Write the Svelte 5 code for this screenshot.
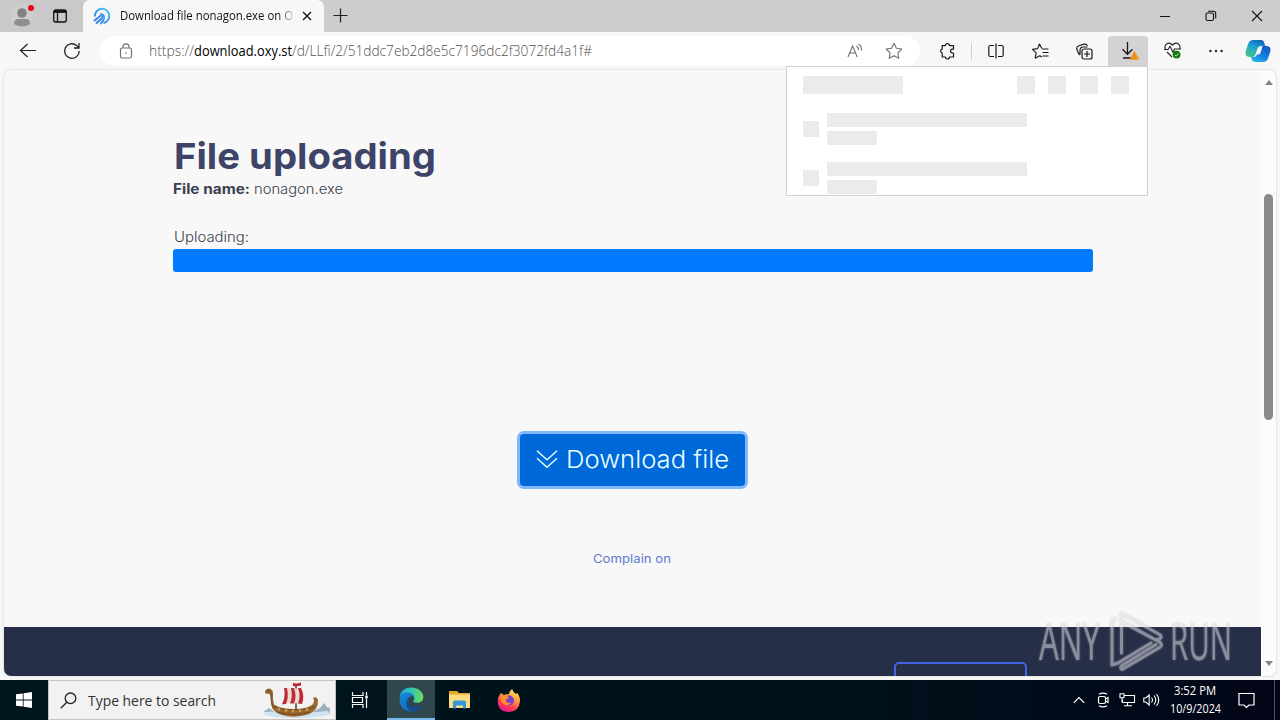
<script>
  const menuIcons = [0, 1, 2, 3];
  const rows = [0, 1];
</script>

{#snippet fit(text, width, height, base, cls)}
  <svg class="fit {cls}" {width} {height}><text x="0" y={base} textLength={width} lengthAdjust="spacingAndGlyphs">{text}</text></svg>
{/snippet}

<div class="desktop">
  <div class="titlebar">
    <div class="tools">
      <svg class="profile" width="24" height="24" viewBox="0 0 24 24">
        <circle cx="12" cy="12" r="11.5" fill="#d0cecd" />
        <circle cx="12" cy="9" r="4.8" fill="#858381" />
        <path d="M4 20q0-5 4-5h8q4 0 4 5q-8 5-16 0z" fill="#918f8d" />
        <circle cx="21" cy="4" r="3" fill="#e60012" />
      </svg>
      <svg class="workspaces" width="16" height="16" viewBox="0 0 16 16" fill="none" stroke="#111" stroke-width="1.3">
        <rect x="1.7" y="2" width="12.6" height="12" rx="2" /><path d="M2 3.6h12" stroke-width="2.6" /><path d="M5.5 4v10" />
      </svg>
    </div>
    <div class="tab">
      <svg width="18" height="18" viewBox="0 0 18 18" fill="none">
        <defs><linearGradient id="fav" x1="0" y1="1" x2="1" y2="0"><stop stop-color="#2670e8" /><stop offset="1" stop-color="#56cbec" /></linearGradient></defs>
        <path d="M1.9 9.500A7.200 7.200 0 1 1 10.500 16" stroke="url(#fav)" stroke-width="2" />
        <path d="M1.5 13.500 8 8.500M3.500 16l6.500-5.500M8 16.500l2.500-3.500" stroke="#3484e9" stroke-width="1.900" stroke-linecap="round" />
        <path d="M6.500 6.500q6-1.500 5.500 6l-3-2z" fill="#4199ed" />
      </svg>
      <div class="tabtitle">{@render fit('Download file nonagon.exe on O', 173, 20, 14, 't12')}</div>
      <svg class="close" width="10" height="10" viewBox="0 0 10 10" stroke="#111" stroke-width="1.3"><path d="M1 1l8 8M9 1L1 9" /></svg>
    </div>
    <svg class="plus" width="15" height="15" viewBox="0 0 15 15" stroke="#222" stroke-width="1.2"><path d="M7.5 .5v14M.5 7.5h14" /></svg>
    <div class="winctl">
      <svg width="11" height="12" viewBox="0 0 11 12" stroke="#111"><path d="M0 6.5h10" /></svg>
      <svg width="12" height="12" viewBox="0 0 12 12" fill="none" stroke="#111" stroke-width="1.1"><rect x="1" y="3" width="7.5" height="7.5" rx="1.5" /><path d="M3 1.2h5.5q2.2 0 2.2 2.2v5" /></svg>
      <svg width="12" height="12" viewBox="0 0 12 12" stroke="#111" stroke-width="1.1"><path d="M1 1l10 10M11 1L1 11" /></svg>
    </div>
  </div>

  <div class="toolbar">
    <svg class="back" width="18" height="16" viewBox="0 0 18 16" fill="none" stroke="#222" stroke-width="1.2"><path d="M8.5 1L1.5 7.500l7 6.500M1.5 7.500H17" /></svg>
    <svg class="reload" width="18" height="18" viewBox="0 0 18 18" fill="none" stroke="#222" stroke-width="1.3"><path d="M16.2 9A7.3 7.3 0 1 1 13.5 3.4L16 5.8M16 1v5h-5" /></svg>
    <div class="address">
      <svg class="lock" width="14" height="16" viewBox="0 0 14 16" fill="none" stroke="#707070" stroke-width="1.2"><rect x="1.5" y="5" width="11" height="10" rx="1.8" /><path d="M4 5V3.8a3 3 0 0 1 6 0V5" /><circle cx="7" cy="10" r=".8" fill="#666" stroke="none" /></svg>
      <div class="url">
        {@render fit('https://', 45, 22, 16, 'u')}
        {@render fit('download.oxy.st', 98, 22, 16, 'u host')}
        {@render fit('/d/LLfi/2/51ddc7eb2d8e5c7196dc2f3072fd4a1f#', 300, 22, 16, 'u')}
      </div>
      <svg class="read" width="16" height="16" viewBox="0 0 16 16" fill="none" stroke="#707070" stroke-width="1.1"><path d="M1 14L5.6 3l4.6 11M2.8 10h5.800M9.5 3q2 1.2 2.1 4M11.5 1q3 2 3.2 6.500" /></svg>
      <svg class="star" width="18" height="18" viewBox="0 0 18 18" fill="none" stroke="#707070" stroke-width="1.1" stroke-linejoin="round"><path d="M9 1.2l2.4 5 5.4.8-3.9 3.8.9 5.5L9 13.7l-4.8 2.6.9-5.5L1.2 7l5.4-.8z" /></svg>
    </div>
    <svg class="puzzle" width="17" height="18" viewBox="0 0 17 18" fill="none" stroke="#181818" stroke-width="1.2" stroke-linejoin="round"><path d="M3.200 3.600h3.200a2 2 0 0 1 4 0h4.100v3.600h-1a1.900 1.900 0 0 0 0 3.800h1v4h-4.100a2 2 0 0 1-4 0H3.200v-4a2 2 0 0 1 0-3.900z" /></svg>
    <i class="sep"></i>
    <svg class="split" width="16" height="16" viewBox="0 0 16 16" fill="none" stroke="#181818" stroke-width="1.2"><path d="M6 2.5H2.3Q.8 2.5.8 4v8q0 1.5 1.5 1.5H6M10 2.5h3.7q1.5 0 1.5 1.5v8q0 1.5-1.5 1.5H10M8 .5v15" /></svg>
    <svg class="favorites" width="17" height="17" viewBox="0 0 17 17" fill="none" stroke="#181818" stroke-width="1.1" stroke-linejoin="round"><path d="M9.8 5.5L7.5 1l-2 4.6-5 .8 3.7 3.5-1 5.300 4.600-2.400 2.200 1.200M10 6h6.500M10.500 9.500h6M10.500 13h6" /></svg>
    <svg class="collections" width="17" height="17" viewBox="0 0 17 17" fill="none" stroke="#181818" stroke-width="1.2"><path d="M4 12L2.500 10.500 .8 6Q.3 3.500 2.800 2.700L8 1.200q2.500-.5 3.400 1.600M4 11.500V7.500q0-3.500 3-3.500h4.500" /><rect x="6" y="6" width="10" height="10" rx="2" /><path d="M11 8v6M8 11h6" /></svg>
    <div class="download">
      <svg width="20" height="20" viewBox="0 0 20 20" fill="none"><path d="M7.5 1v12M2.5 8.300l5 5 5-5M3 17h8" stroke="#181818" stroke-width="1.3" /><path d="M14.5 10.500l4.200 7.800h-8.400z" fill="#f7941d" stroke="#f7941d" stroke-linejoin="round" /><path d="M14.5 13v2.500m0 1v1" stroke="#c97a1c" stroke-width="1" /></svg>
    </div>
    <svg class="health" width="18" height="18" viewBox="0 0 18 18" fill="none" stroke="#222" stroke-width="1.1"><path d="M1.5 7Q.2 4.8 2 2.5q3-3 6.5.5 3.500-3.500 6.500-.5 1.800 2.300.5 4.500M0 7.500h4l2-3.200 3 6L10.500 7H17M3 10l5 5" /><circle cx="12.600" cy="12.600" r="3.900" fill="#107c10" stroke="none" /><path d="M11 13l1.200 1.100 2.400-2.500" stroke="#bde5bd" stroke-width="1" /></svg>
    <svg class="more" width="16" height="4" viewBox="0 0 16 4" fill="#222"><circle cx="2.400" cy="2" r="1.200" /><circle cx="8" cy="2" r="1.200" /><circle cx="13.600" cy="2" r="1.200" /></svg>
    <svg class="copilot" width="26" height="24" viewBox="0 0 26 24">
      <defs>
        <linearGradient id="cp1" x1=".7" y1="0" x2=".2" y2="1"><stop stop-color="#1265bd" /><stop offset=".4" stop-color="#1ba1d6" /><stop offset="1" stop-color="#45c48a" /></linearGradient>
        <linearGradient id="cp2" x1=".8" y1="0" x2=".2" y2="1"><stop stop-color="#0e58bd" /><stop offset=".5" stop-color="#137ce0" /><stop offset="1" stop-color="#27b3f0" /></linearGradient>
      </defs>
      <path d="M8 1h8q2.500 0 3.300 3l1 3H16q-2.700 0-3.600 3L10.600 15q-1 3-3.600 3H5q-6 0-4-6.500l2.300-7Q4.500 1 8 1z" fill="url(#cp1)" />
      <path d="M18 23h-8q-2.500 0-3.300-3L6 18h2.500q2.700 0 3.600-2.500h1.500q1.500 0 2.200-2.500L17.600 7H21q6 0 4 6.500l-2.300 6.500Q21.500 23 18 23z" fill="url(#cp2)" />
    </svg>
  </div>

  <div class="frame">
    <div class="page">
      <main>
        <h1>{@render fit('File uploading', 262, 48, 36, 'h1')}</h1>
        <p class="name">{@render fit('File name:', 77, 22, 16, 'b14')}{@render fit('nonagon.exe', 89, 22, 16, 'm14')}</p>
        <p class="uploading">{@render fit('Uploading:', 75, 22, 16, 'm14')}</p>
        <div class="bar"></div>
        <button>
          <svg width="22" height="20" viewBox="0 0 22 20" fill="none" stroke="#e9ffff" stroke-width="1.4"><path d="M1 .8l10 9 10-9M1 8.200l10 9 10-9" /></svg>
          {@render fit('Download file', 163, 32, 24, 'btn')}
        </button>
        <p class="complain">{@render fit('Complain on', 78, 18, 13, 'link')}</p>
      </main>
      <footer><div class="outline"></div></footer>
    </div>
    <div class="scroll"><i class="up"></i><i class="thumb"></i><i class="down"></i></div>
  </div>

  <div class="taskbar">
    <div class="start"><svg width="16" height="16" viewBox="0 0 16 16" fill="#fff"><path d="M0 2.300l6.800-.9v6.200H0zM7.600 1.300L16 .1v7.500H7.600zM0 8.400h6.800v6.200L0 13.700zM7.600 8.400H16v7.500l-8.400-1.200z" /></svg></div>
    <div class="search">
      <svg width="17" height="17" viewBox="0 0 17 17" fill="none" stroke="#222" stroke-width="1.3"><circle cx="10.500" cy="6.300" r="5.300" /><path d="M6.800 10.200L.8 16.200" /></svg>
      <div class="query">{@render fit('Type here to search', 128, 24, 18, 'q')}</div>
      <svg class="ship" width="70" height="37" viewBox="0 0 70 37">
        <path d="M1 30l6-4 6 4zM52 29l6-3 4-5 3 4 3 1v6l-16 1z" fill="#9db4c0" />
        <path d="M0 31q12-3 24-1t42-1l2 3q-10 4-36 4-25 0-32-5z" fill="#cfe4f0" />
        <path d="M34 4v23" stroke="#5b3823" stroke-width="1.500" />
        <path d="M31 1q4 1 8-.5v3q-4 1-8 .5z" fill="#bc2534" />
        <path d="M22 6q10 1 17 0 4 8 1 16-10-2-20 0 4-8 2-16z" fill="#eadbcf" />
        <path d="M22 6h3q2 9-1 16l-4 .3q4-8 2-16.300zM29 6h3q3 8 0 15.500h-4q3-7 1-15.500zM36 6h3q4 8 1 16l-4-.4q3-8 0-15.600z" fill="#c22938" />
        <path d="M3 11q-.5-3 3-4.500 5 0 5 5-.5 6 1 11 8 5 22 4.500 13-.5 17-5 2-4 0-6 4-2 5 2 .5 11-10 14.500-14 4-26 .5Q9 30 9 20q0-8-2-8.500-1 1-4-.5z" fill="#99672f" />
        <path d="M5 9q4-1 4 4 0 10 3 14M12 25q20 6 41 0M15 30q18 5 33 0" stroke="#6d461f" stroke-width=".9" fill="none" />
        <g fill="#c99a48"><circle cx="17" cy="27" r="1.500" /><circle cx="24" cy="28.500" r="1.500" /><circle cx="31" cy="29" r="1.500" /><circle cx="38" cy="28.500" r="1.500" /><circle cx="45" cy="27.500" r="1.500" /></g>
      </svg>
    </div>
    <div class="task"><svg class="tv" width="18" height="18" viewBox="0 0 18 18" fill="none" stroke="#fff" stroke-width="1.200"><path d="M1.500 1v3.500H12V1M1.500 17v-3.500H12V17M1.500 6.500h10v5h-10zM15.500 1v3m0 4v9" /><path d="M15.500 4.500v3" stroke-width="2.500" /></svg></div>
    <div class="task active">
      <svg width="25" height="25" viewBox="0 0 25 25">
        <defs><linearGradient id="edgeTop"><stop stop-color="#1fa5e0" /><stop offset=".55" stop-color="#36c9ac" /><stop offset="1" stop-color="#75dc4f" /></linearGradient><linearGradient id="edgeBot" y2="1"><stop stop-color="#1689d8" /><stop offset="1" stop-color="#0b60ad" /></linearGradient></defs>
        <path d="M.6 10Q2 .5 12.500.5 20 .5 23.500 6.500 26 13 20.500 15.500q-5 1-6.500-1 3-4-.6-6.300Q7.500 4.500.6 10z" fill="url(#edgeTop)" />
        <path d="M.5 12Q1 5.500 8 5.600q5.500.1 7.300 4-3-1.700-5.300.9-2.500 8 4.800 9.500 4 .8 8.200-1.500Q18.500 25 12 24.500 1 24 .5 12z" fill="url(#edgeBot)" />
        <path d="M10 10.500q-5 4.500-1.500 10.200 2 3 5 3.700 6-.4 9.500-5.900-4.500 2.500-9 1.100-5.500-2-4-9.100z" fill="#164b86" />
      </svg>
    </div>
    <div class="task">
      <svg width="23" height="20" viewBox="0 0 23 20"><path d="M1 1h8l2 2h11v15H1z" fill="#e6a82d" /><path d="M1 4.500h21V18H1z" fill="#fbdc80" /><path d="M5 18.500v-6q0-2 2-2h9q2 0 2 2v6h-3v-3H8v3H5z" fill="#3299d6" /></svg>
    </div>
    <div class="task">
      <svg width="24" height="25" viewBox="0 0 24 25">
        <defs><linearGradient id="fox" x1=".8" y1="0" x2=".3" y2="1"><stop stop-color="#fff44f" /><stop offset=".4" stop-color="#ff9640" /><stop offset=".7" stop-color="#ff4052" /><stop offset="1" stop-color="#e31587" /></linearGradient></defs>
        <path d="M4 5l3 2 3-1 2 .5q0-3 3-5.500 1 3 4 5 1 0 .8-1.500Q23 8 23 13q-1 11-11 11Q1 24 .8 13 1 9 2.500 7z" fill="url(#fox)" />
        <circle cx="12" cy="12.500" r="5" fill="#7542cb" /><path d="M3.500 9q3-3 6.500-1l2 1.500q-1 1.800-3.500 2 1 4.500 6 3-3 4-7 2-4-2-4-7.500z" fill="#ff8d2a" />
      </svg>
    </div>
    <div class="tray">
      <svg class="chev" width="12" height="8" viewBox="0 0 12 8" fill="none" stroke="#fff" stroke-width="1.200"><path d="M.8 6.800L6 1.500l5.200 5.300" /></svg>
      <svg class="meet" width="13" height="16" viewBox="0 0 13 16" fill="none" stroke="#fff" stroke-width="1.200"><rect x="1.500" y="4.500" width="7" height="7" rx="1.500" /><path d="M8.500 7l2.500-1.500v5L8.500 9M2 2.300q4-2.500 8 0M2 13.700q4 2.500 8 0" /></svg>
      <svg class="net" width="17" height="14" viewBox="0 0 17 14" fill="none" stroke="#fff" stroke-width="1.100"><path d="M5.500 2.500h10v7h-12v-3M8.500 9.500v3M5 12.800h8M1 .8h4v4H1zM3 5v4" /></svg>
      <svg class="sound" width="17" height="14" viewBox="0 0 17 14" fill="none" stroke="#fff" stroke-width="1.100"><path d="M.8 5v4h2l3.400 3V2L2.800 5zM8.500 4.500q2 2.500 0 5M11 2.500q3.500 4.500 0 9M13.500 1q4.500 6 0 12" /></svg>
      <div class="clock">{@render fit('3:52 PM', 42, 18, 13, 'ck')}{@render fit('10/9/2024', 51, 18, 13, 'ck')}</div>
      <svg class="notice" width="17" height="17" viewBox="0 0 17 17" fill="none" stroke="#fff" stroke-width="1.200"><path d="M1 1.500h15v11.500h-5L8.500 15.500 6 13H1z" /></svg>
      <i class="peek"></i>
    </div>
  </div>

  <div class="popup">
    <div class="head"><i class="title"></i>{#each menuIcons as n (n)}<i class="sq"></i>{/each}</div>
    {#each rows as r (r)}
      <div class="item"><i class="thumbn"></i><div><i class="l1"></i><i class="l2"></i></div></div>
    {/each}
  </div>

  <svg class="watermark" width="200" height="80" viewBox="0 0 200 80">
    <g class="wm" font-size="52">
      <text x="3" y="57.5" textLength="61" lengthAdjust="spacingAndGlyphs">ANY</text>
      <text x="134" y="57.5" textLength="62" lengthAdjust="spacingAndGlyphs">RUN</text>
    </g>
    <g class="play"><path d="M79 17l-3 2v44l6-2 33-20M85.500 51V11l38 21.500q4 3-1 5h-4L88 21M86 67.500q-2.500-2 0-4l34-21M86 67.500l37.500-22q4-2.500 0-5.500L92 22.500" /></g>
  </svg>
</div>

<style>
  :global(body) { margin: 0; overflow: hidden; }
  .desktop { position: relative; width: 1280px; height: 720px; display: flex; flex-direction: column; background: #f7f7f7; font-family: "Open Sans", sans-serif; }
  svg { display: block; flex: none; }
  i { display: block; flex: none; }
  p, h1 { margin: 0; }
  .fit { overflow: visible; fill: currentColor; }
  .titlebar { height: 32px; display: flex; background: #cdcdcd; }
  .tools { width: 83px; box-sizing: border-box; display: flex; align-items: center; padding-left: 10px; gap: 18px; background: #c9c9c9; border-bottom-right-radius: 5px; }
  .tab { width: 241px; height: 32px; box-sizing: border-box; display: flex; align-items: center; padding-left: 10px; background: #f7f7f7; border-radius: 7px 7px 0 0; }
  .tabtitle { width: 174px; margin-left: 9px; color: #111; -webkit-mask-image: linear-gradient(90deg, #000 158px, transparent 176px); mask-image: linear-gradient(90deg, #000 158px, transparent 176px); }
  .t12 { font-size: 12px; }
  .close { margin-left: 8px; }
  .plus { margin: 8px 0 0 9px; }
  .winctl { margin-left: auto; padding-right: 17px; display: flex; align-items: center; gap: 35px; }
  .winctl svg:first-child { margin-right: -1px; }
  .winctl svg:nth-child(2) { margin-right: -1px; }
  .toolbar { height: 38px; display: flex; align-items: center; box-sizing: border-box; padding-left: 19px; }
  .reload { margin-left: 26px; }
  .address { width: 820px; height: 30px; margin-left: 19px; border-radius: 16px; background: #fff; display: flex; align-items: center; box-sizing: border-box; padding-left: 19px; }
  .url { display: flex; width: 444px; margin-left: 16px; color: #505050; }
  .u { font-size: 14px; font-weight: 300; }
  .host { color: #000; font-weight: 400; }
  .read { margin-left: 254px; }
  .star { margin-left: 22px; }
  .puzzle { margin-left: 19px; }
  .sep { width: 1px; height: 17px; background: #cfcfcf; margin-left: 15px; }
  .split { margin-left: 16px; }
  .favorites { margin-left: 28px; }
  .collections { margin-left: 27px; }
  .download { width: 40px; height: 31px; margin-left: 15px; border-radius: 4px 4px 0 0; background: #d3d3d3; display: flex; align-items: center; justify-content: center; }
  .download svg { margin-left: 4px; }
  .health { margin-left: 16px; }
  .more { margin-left: 26px; }
  .copilot { margin-left: 21px; }
  .frame { flex: none; width: 1272px; height: 606px; margin: 0 4px; display: flex; border-radius: 7px; overflow: hidden; background: #fcfcfc; box-shadow: 0 0 2px #bdbdbd; }
  .page { width: 1257px; display: flex; flex-direction: column; background: #f8f8f8; }
  main { flex: none; height: 557px; padding-left: 169px; box-sizing: border-box; font-family: Inter, sans-serif; color: #394150; display: flex; flex-direction: column; }
  h1 { margin-top: 63px; height: 48px; padding-left: 1px; color: #3d4468; }
  .h1 { font-size: 36px; font-weight: 700; }
  .name { display: flex; gap: 4px; height: 22px; margin-top: -3px; }
  .b14 { font-size: 14px; font-weight: 700; }
  .m14 { font-size: 14px; font-weight: 300; }
  .uploading { margin-top: 26px; height: 22px; padding-left: 1px; }
  .bar { width: 920px; height: 23px; margin-top: 1px; border-radius: 3px; background: #007bff; }
  button { margin: 162px 0 0 347px; width: 225px; height: 52px; padding: 0 0 0 16px; border: 0; border-radius: 4px; background: #0069d9; color: #e9ffff; box-shadow: 0 0 0 3px #80b9fa; display: flex; align-items: center; gap: 8px; font-family: inherit; flex: none; }
  .btn { font-size: 24px; font-weight: 300; }
  .complain { margin: 64px 0 0 420px; color: #607bce; }
  .link { font-size: 12px; }
  footer { height: 49px; box-sizing: border-box; overflow: hidden; background: #272e48; display: flex; padding: 35px 0 0 890px; }
  .outline { width: 129px; height: 30px; flex: none; border: 2px solid #4464e4; border-radius: 5px; }
  .scroll { width: 15px; display: flex; flex-direction: column; align-items: center; }
  .up { margin-top: 10px; border: 4px solid transparent; border-top: 0; border-bottom: 5px solid #858585; }
  .thumb { width: 9px; height: 226px; margin-top: 109px; border-radius: 5px; background: #8b8b8b; }
  .down { margin-top: 241px; border: 4px solid transparent; border-bottom: 0; border-top: 5px solid #858585; }
  .taskbar { height: 40px; margin-top: 4px; display: flex; background: linear-gradient(90deg, #00151c, #00121c 65%, #020516); }
  .start { width: 48px; display: grid; place-items: center; }
  .search { width: 288px; box-sizing: border-box; border: 1px solid #c7c1c1; background: #f2f2f2; display: flex; align-items: center; padding-left: 11px; color: #333; }
  .query { margin-left: 11px; }
  .q { font-size: 15px; }
  .ship { margin-left: 46px; }
  .task { width: 49px; display: grid; place-items: center; }
  .tv { margin-right: 1px; }
  .task.active { width: 48px; height: 38px; background: #30474d; border-bottom: 2px solid #78b7ea; margin-left: 2px; }
  .tray { margin-left: auto; width: 207px; display: flex; align-items: center; color: #fff; }
  .meet { margin-left: 12px; }
  .net { margin-left: 9px; }
  .sound { margin-left: 7px; }
  .clock { width: 52px; height: 36px; margin-left: 9px; display: flex; flex-direction: column; align-items: center; }
  .ck { font-size: 12px; }
  .notice { margin-left: 17px; }
  .peek { width: 1px; height: 40px; margin-left: 19px; background: #4a4d5a; }
  .popup { position: absolute; left: 786px; top: 66px; width: 362px; height: 130px; box-sizing: border-box; border: 1px solid #d1d1d1; background: #fff; padding: 9px 18px 0 16px; overflow: hidden; }
  .popup i { background: #ebebeb; }
  .head { height: 18px; display: flex; gap: 13.500px; }
  .title { width: 100px; margin-right: auto; border-radius: 1px; }
  .sq { width: 18px; height: 18px; }
  .item { display: flex; align-items: center; gap: 8px; height: 32px; margin-top: 17px; }
  .head + .item { margin-top: 19px; }
  .thumbn { width: 16px; height: 16px; }
  .l1 { width: 200px; height: 14px; margin-bottom: 4px; }
  .l2 { width: 50px; height: 14px; border-radius: 2px; }
  .watermark { position: absolute; left: 1036px; top: 602px; overflow: visible; opacity: .55; filter: drop-shadow(0 0 1px #aaa); }
  .wm { fill: #dcdde2; font-family: "Open Sans", sans-serif; font-weight: 500; }
  .play { fill: none; stroke: #dcdde2; stroke-width: 3; stroke-linejoin: round; stroke-linecap: round; }
</style>
